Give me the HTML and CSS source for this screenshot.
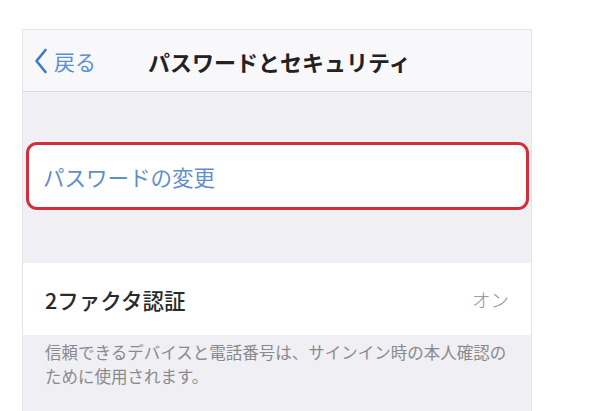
FILE: index.html
```html
<!DOCTYPE html>
<html lang="ja">
<head>
<meta charset="utf-8">
<link rel="stylesheet" href="styles.css">
</head>
<body>
<div class="screen">
  <div class="nav">
    <div class="back">
      <svg class="chev" width="14" height="26" viewBox="0 0 14 26"><path d="M11.5 2 L2.5 13 L11.5 24" fill="none" stroke="#3b78c8" stroke-width="2.6" stroke-linecap="round" stroke-linejoin="round"/></svg>
      <span>戻る</span>
    </div>
    <div class="title">パスワードとセキュリティ</div>
  </div>
  <div class="gap"></div>
  <div class="row row-link">
    <span class="link">パスワードの変更</span>
  </div>
  <div class="gap gap2"></div>
  <div class="row">
    <span class="label">2ファクタ認証</span>
    <span class="value">オン</span>
  </div>
  <div class="note">信頼できるデバイスと電話番号は、サインイン時の本人確認の<br>ために使用されます。</div>
</div>
</body>
</html>
```
FILE: styles.css
```css
* { box-sizing: border-box; }
html, body { margin: 0; padding: 0; background: #ffffff; }
body {
  width: 605px;
  height: 411px;
  overflow: hidden;
  font-family: "Noto Sans CJK JP", "Noto Sans", sans-serif;
  padding: 29px 0 0 22px;
}
.screen {
  width: 510px;
  height: 400px;
  background: #efeff4;
  border: 1px solid #e4e4e8;
  border-bottom: none;
}
.nav {
  height: 62px;
  background: #f8f8fa;
  border-bottom: 1px solid #dcdce0;
  display: flex;
  align-items: center;
  padding-left: 11px;
}
.back {
  display: flex;
  align-items: center;
  gap: 6px;
  color: #5d8fd3;
  font-size: 21px;
  width: 114px;
}
.chev { display: block; }
.title {
  font-size: 22px;
  font-weight: 700;
  color: #222;
}
.gap { height: 50px; }
.gap2 { height: 53px; }
.row {
  height: 72px;
  background: #ffffff;
  display: flex;
  align-items: center;
  justify-content: space-between;
  padding: 0 22px 0 22px;
}
.row-link {
  height: 68px;
  margin: 0 2px 0 3px;
  border: 3px solid #d12f3c;
  border-radius: 11px;
  padding-left: 14px;
}
.link {
  color: #5f8fd0;
  font-size: 21.5px;
}
.label {
  font-size: 21.5px;
  color: #2a2a2a;
  font-weight: 500;
}
.value {
  font-size: 18.5px;
  font-weight: 300;
  color: #8e8e93;
}
.note {
  padding: 5px 10px 0 22px;
  font-size: 16.5px;
  line-height: 24px;
  color: #8a8a8e;
  white-space: nowrap;
}
```
